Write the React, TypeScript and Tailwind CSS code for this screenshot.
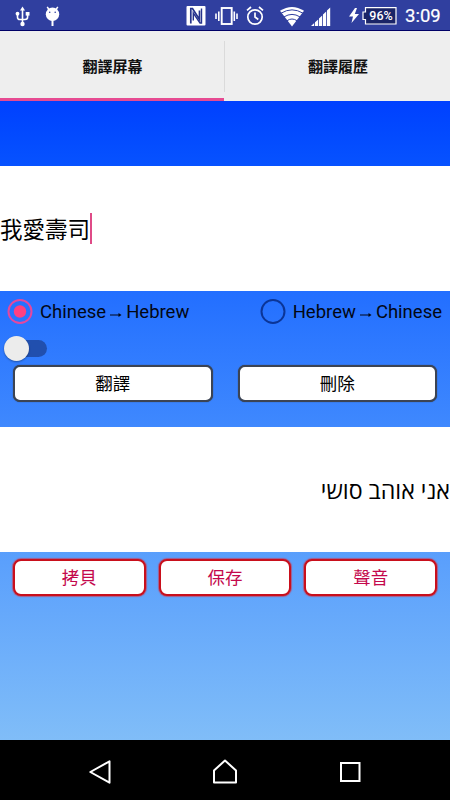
import React from "react";

const ROBOTO = "font-['Roboto','Noto_Sans_CJK_TC',sans-serif]";

function StatusBar() {
  return (
    <header className="flex h-[31px] shrink-0 items-start border-b border-[#000066] bg-[#303f9f] text-white">
      <svg className="ml-[15px] mt-[6px] h-[21px] w-[16px]" viewBox="0 0 16 21" fill="none" stroke="#fff" strokeWidth="1.6">
        <path d="M7.500 3V18M2.500 8V11.200Q2.500 13.500 5 13.500H10Q12.600 13.500 12.600 11V8" />
        <path d="M7.500 0.500L10 4.500H5Z" fill="#fff" stroke="none" />
        <circle cx="7.500" cy="18" r="2.200" fill="#fff" stroke="none" />
        <circle cx="2.500" cy="7.700" r="1.900" fill="#fff" stroke="none" />
        <path d="M10.700 6H14.500V9.600H10.700Z" fill="#fff" stroke="none" />
      </svg>
      <svg className="ml-[14px] mt-[6px] h-[21px] w-[16px]" viewBox="0 0 16 21">
        <circle cx="7.500" cy="8.200" r="6.700" fill="#fff" />
        <path d="M2.200 0.800L4.300 4M12.800 0.800L10.700 4" stroke="#fff" strokeWidth="1.500" />
        <path d="M7.500 14V20" stroke="#fff" strokeWidth="2" />
        <circle cx="4.700" cy="6.200" r="0.800" fill="#303f9f" />
        <circle cx="10.200" cy="6.200" r="0.800" fill="#303f9f" />
      </svg>
      <svg className="ml-[125px] mt-[6px] h-[20px] w-[20px]" viewBox="0 0 20 20" fill="none">
        <rect x="0.500" y="0" width="19" height="19.500" rx="1" fill="#fff" />
        <path d="M4.800 17.500V2.500H6.500L13.500 13.500V4.500" stroke="#26338c" strokeWidth="1.700" />
        <path d="M7.300 14.500V7L14 17H15.500V2.500" stroke="#26338c" strokeWidth="1.400" />
      </svg>
      <svg className="ml-[9px] mt-[7px] h-[18px] w-[23px]" viewBox="0 0 23 18" fill="none" stroke="#fff" strokeWidth="1.900">
        <rect x="6.700" y="1" width="10" height="16" />
        <path d="M1 6.500V12M3.800 4.500V14M22 6.500V12M19.300 4.500V14" strokeWidth="1.600" />
      </svg>
      <svg className="ml-[8px] mt-[6px] h-[20px] w-[19px]" viewBox="0 0 19 20" fill="none" stroke="#fff" strokeWidth="1.700">
        <circle cx="9" cy="11" r="7.200" />
        <path d="M9 6.500V11L12.300 13.500M1 4.400L5 1M17 4.400L13 1" />
      </svg>
      <svg className="ml-[15px] mt-[7px] h-[20px] w-[24px]" viewBox="0 0 24 20" fill="#fff">
        <path d="M0 3.800Q12 -3.800 24 3.800L12 19.500Z" />
        <path d="M1 6.200Q12 -0.500 23 6.200M4 9.900Q12 4.900 20 9.900M7 13.700Q12 10.300 17 13.700" fill="none" stroke="#303f9f" strokeWidth="1" />
      </svg>
      <svg className="ml-[7px] mt-[7px] h-[20px] w-[20px]" viewBox="0 0 20 20" fill="#fff">
        <path d="M0 19L3.200 16V19ZM4 15.200L7.200 12.500V19H4ZM8 11.500L11.200 8.500V19H8ZM12 7.500L15.200 4.500V19H12ZM16 3.500L19.200 0.500V19H16Z" />
      </svg>
      <svg className="ml-[18px] mt-[8px] h-[16px] w-[10px]" viewBox="0 0 10 16" fill="#fff">
        <path d="M6 0L0 8.500H4L2.500 15L10 6H5.800L8 0Z" />
      </svg>
      <div className="relative ml-[3px] mt-[7px] flex h-[18px] w-[35px] items-center justify-center pl-[3px]">
        <svg className="absolute inset-0" width="35" height="18" fill="none" stroke="#fff" strokeWidth="1.200">
          <path d="M3.500 0.700H34V17H3.500V12.500H1V5H3.500Z" fill="#1a2467" />
        </svg>
        <span className="relative text-[12.500px] font-medium leading-none">96%</span>
      </div>
      <time className="ml-[8px] mt-[6px] text-[18.500px] leading-[21px] [-webkit-text-stroke:0.2px_white]">3:09</time>
    </header>
  );
}

function Tabs() {
  return (
    <nav className="grid h-[70px] shrink-0 grid-cols-[224px_226px] bg-[#eee] text-[15px] font-bold text-[#111]">
      <button className="flex h-[70px] items-center justify-center border-b-[3px] border-[#e64a91] pt-[6px] pl-[1px]">翻譯屏幕</button>
      <div className="flex h-[70px] items-start">
        <span className="mt-[10px] h-[51px] w-px bg-[#dadada]" />
        <button className="h-[70px] flex-1 pt-[2px] pl-[1px]">翻譯履歷</button>
      </div>
    </nav>
  );
}

function Direction({ label, from, to, checked }: { label: string; from: string; to: string; checked?: boolean }) {
  return (
    <label aria-label={label} className="flex h-[26px] items-center">
      <svg width="26" height="26" viewBox="0 0 26 26" fill="none">
        <circle cx="13" cy="13.500" r="11.500" stroke={checked ? "#e5489e" : "#0b3597"} strokeWidth="2" />
        {checked && <circle cx="13" cy="13.500" r="6.200" fill="#ff4081" />}
      </svg>
      <span className="ml-[7px] flex items-center pt-[2px] text-[18.500px] leading-[26px] text-[#020714]">
        {from}
        <svg className="ml-[3px] mr-[3px] mt-[5px]" width="14" height="8" viewBox="0 0 14 8">
          <path d="M1 4H11" stroke="#020714" strokeWidth="1" />
          <path d="M9.500 2L12.500 4L9.500 6Z" fill="#020714" />
        </svg>
        {to}
      </span>
    </label>
  );
}

function ActionButton({ children }: { children: string }) {
  return (
    <button className="h-[37px] flex-1 rounded-[7px] border-2 border-[#3c4454] bg-white pt-[3px] text-[17.500px] leading-none text-black shadow-[0_0_1px_#333]">
      {children}
    </button>
  );
}

function ResultButton({ children }: { children: string }) {
  return (
    <button className="h-[37px] flex-1 rounded-[8px] border-2 border-[#c90f1c] bg-white pt-[3px] text-[17.500px] leading-none text-[#c4084c] shadow-[0_0_1px_1px_#d8283890]">
      {children}
    </button>
  );
}

function NavigationBar() {
  return (
    <footer className="flex h-[60px] shrink-0 items-center justify-between bg-black pl-[88px] pr-[88px] pt-[3px]">
      <svg width="24" height="26" viewBox="0 0 24 26" fill="none" stroke="#fff" strokeWidth="2">
        <path d="M2.300 13L21.500 2.300V23.700Z" strokeLinejoin="round" />
      </svg>
      <svg width="26" height="26" viewBox="0 0 26 26" fill="none" stroke="#fff" strokeWidth="2">
        <path d="M2 11.500L13 1.500L24 11.500V23.500H2Z" strokeLinejoin="round" />
      </svg>
      <svg width="24" height="26" viewBox="0 0 24 26" fill="none" stroke="#fff" strokeWidth="2">
        <rect x="3" y="4" width="18.500" height="18" />
      </svg>
    </footer>
  );
}

export default function App() {
  return (
    <div className={`flex h-[800px] w-[450px] flex-col overflow-hidden bg-black ${ROBOTO}`} lang="zh-TW">
      <StatusBar />
      <Tabs />
      <main className="flex h-[639px] shrink-0 flex-col bg-linear-to-b from-[#0040ff] to-[#80bdf8]">
        <section className="mt-[65px] flex h-[125px] items-center bg-white text-[22.500px] text-black">
          <span className="pt-[4px]">我愛壽司</span>
          <span className="h-[31px] w-[2px] bg-[#df4b87]" />
        </section>
        <section className="h-[136px] pt-[7px]">
          <div className="flex justify-between pl-[7px] pr-[8px]">
            <Direction label="Chinese to Hebrew" from="Chinese" to="Hebrew" checked />
            <Direction label="Hebrew to Chinese" from="Hebrew" to="Chinese" />
          </div>
          <button role="switch" aria-checked="false" aria-label="Toggle" className="ml-[4px] mt-[11px] flex h-[26px] w-[43px] items-center">
            <span className="flex h-[17px] w-full items-center rounded-full bg-[#214fae]">
              <span className="size-[25px] shrink-0 rounded-full bg-[#ececec] shadow-[0_1px_2px_#0005]" />
            </span>
          </button>
          <div className="mt-[4px] flex gap-[25px] px-[13px]">
            <ActionButton>翻譯</ActionButton>
            <ActionButton>刪除</ActionButton>
          </div>
        </section>
        <section dir="rtl" lang="he" className="flex h-[125px] items-center bg-white pt-[2px] font-['Noto_Sans','Open_Sans',sans-serif] text-[23.200px] text-black">
          אני אוהב סושי
        </section>
        <section className="flex gap-[13px] px-[13px] pt-[7px]">
          <ResultButton>拷貝</ResultButton>
          <ResultButton>保存</ResultButton>
          <ResultButton>聲音</ResultButton>
        </section>
      </main>
      <NavigationBar />
    </div>
  );
}
